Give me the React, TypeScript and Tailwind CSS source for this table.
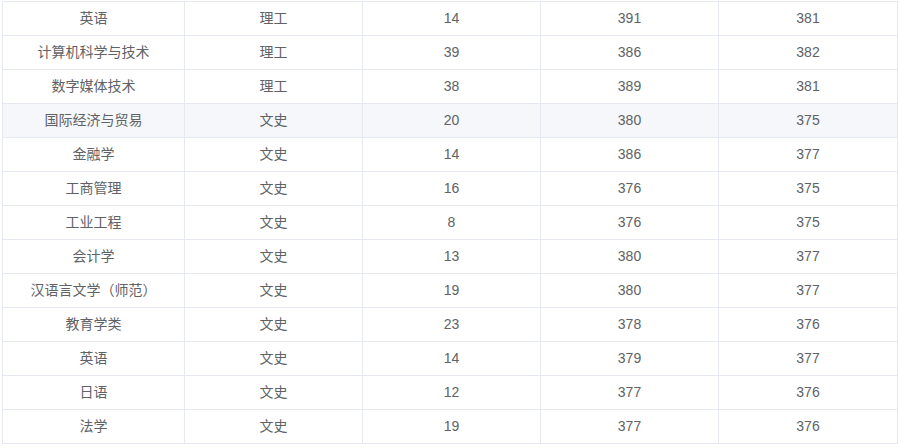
const rows: [string, string, string, string, string][] = [
  ["英语", "理工", "14", "391", "381"],
  ["计算机科学与技术", "理工", "39", "386", "382"],
  ["数字媒体技术", "理工", "38", "389", "381"],
  ["国际经济与贸易", "文史", "20", "380", "375"],
  ["金融学", "文史", "14", "386", "377"],
  ["工商管理", "文史", "16", "376", "375"],
  ["工业工程", "文史", "8", "376", "375"],
  ["会计学", "文史", "13", "380", "377"],
  ["汉语言文学（师范）", "文史", "19", "380", "377"],
  ["教育学类", "文史", "23", "378", "376"],
  ["英语", "文史", "14", "379", "377"],
  ["日语", "文史", "12", "377", "376"],
  ["法学", "文史", "19", "377", "376"],
];

export default function App() {
  return (
    <div className="h-[448px] w-[901px] bg-white pl-[2px] pt-[1px]">
      <table
        className="w-[895px] table-fixed border-collapse text-[14px] text-[#606266]"
        style={{ fontFamily: '"Liberation Sans", "Noto Sans CJK SC", sans-serif' }}
      >
        <colgroup>
          <col className="w-[182px]" />
          <col className="w-[178px]" />
          <col className="w-[178px]" />
          <col className="w-[178px]" />
          <col className="w-[179px]" />
        </colgroup>
        <tbody>
          {rows.map((r, i) => (
            <tr key={i} className={i === 3 ? "bg-[#f5f7fa]" : ""}>
              {r.map((c, j) => (
                <td
                  key={j}
                  className="h-[34px] border border-[#e6e9f2] px-0 pt-0 pb-[2px] text-center leading-none"
                >
                  {c}
                </td>
              ))}
            </tr>
          ))}
        </tbody>
      </table>
    </div>
  );
}
